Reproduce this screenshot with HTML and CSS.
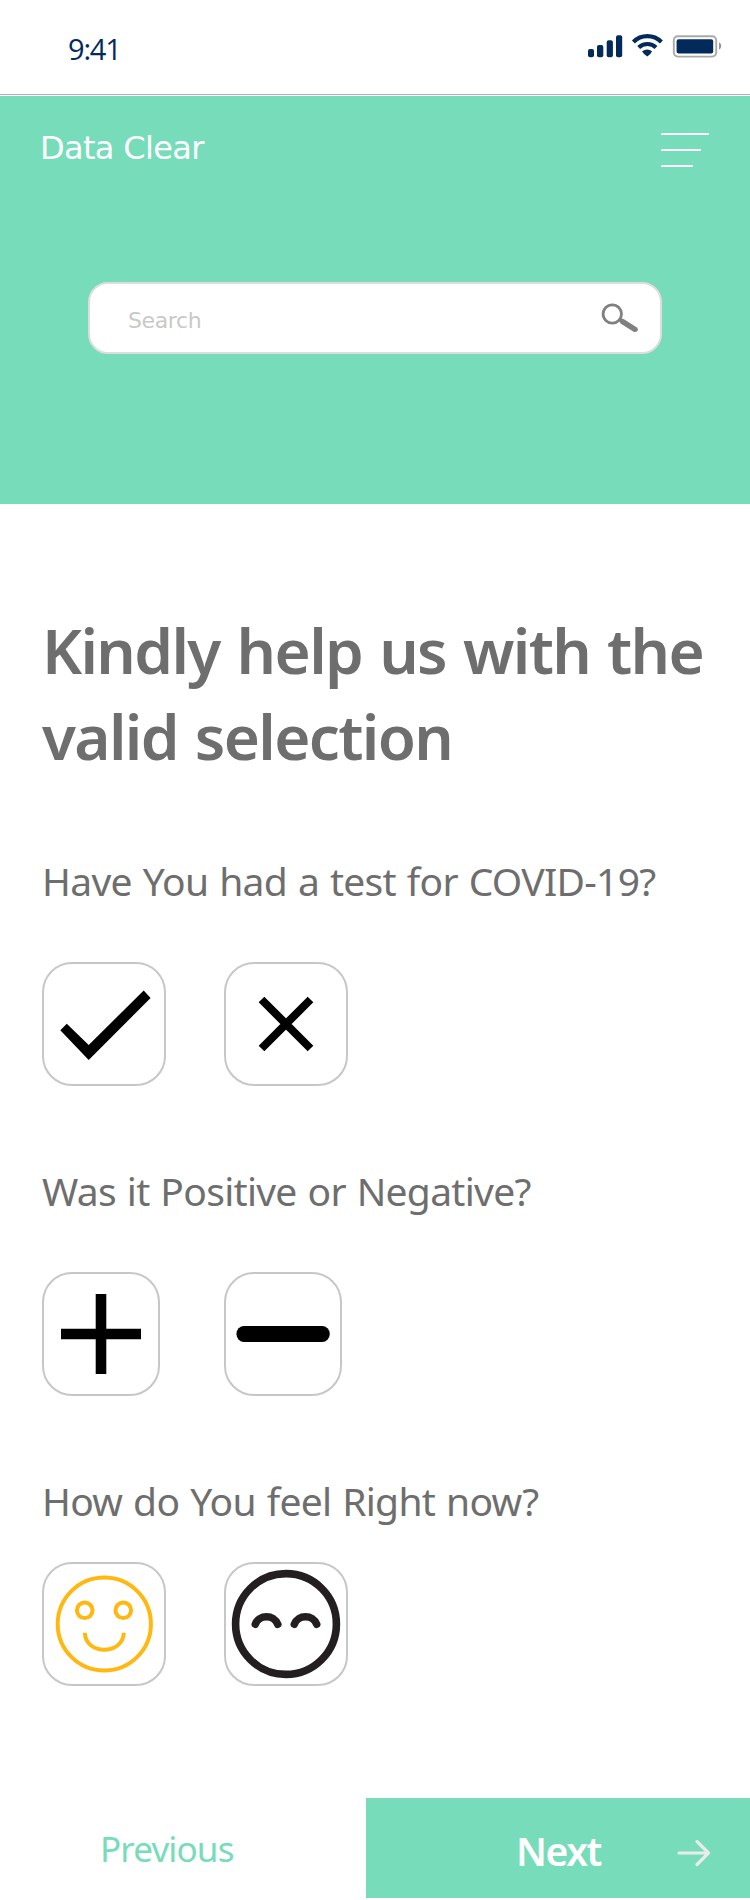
FILE: index.html
```
<!DOCTYPE html>
<html lang="en">
<head>
<meta charset="utf-8">
<title>Data Clear</title>
<link rel="stylesheet" href="styles.css">
</head>
<body>
<div class="status">
  <span class="time">9:41</span>
  <svg class="status-icons" width="136" height="26" viewBox="0 0 136 26" aria-hidden="true">
    <g fill="#022b5c">
      <rect x="0" y="16" width="6" height="8.3" rx="2"/>
      <rect x="9" y="12" width="6.3" height="12.3" rx="2"/>
      <rect x="18.7" y="7.3" width="6.2" height="17" rx="2"/>
      <rect x="28" y="2.3" width="6.2" height="22" rx="2"/>
      <path d="M54 18.200 Q59.500 14.800 64 18.200 Q63 21 59.300 23.500 Q55.500 21 54 18.200Z"/>
      <rect x="88.600" y="6.200" width="36.600" height="14.300" rx="2"/>
    </g>
    <g fill="none" stroke="#022b5c" stroke-width="4.100">
      <path d="M45.400 9 C53 1.200 65.600 1.200 73.400 9"/>
      <path d="M50.700 14.400 C55.500 9.800 63.200 9.800 68 14.400"/>
    </g>
    <rect x="85.800" y="3.200" width="42.400" height="20.400" rx="4" fill="none" stroke="#aaa" stroke-width="1.900"/>
    <path d="M131 9.300 Q133.300 10.200 133.300 13 Q133.300 15.800 131 16.700Z" fill="#999"/>
  </svg>
</div>
<header class="hero">
  <div class="topbar">
    <span class="brand">Data Clear</span>
    <div class="menu"><i class="line long"></i><i class="line mid"></i><i class="line short"></i></div>
  </div>
  <div class="search">
    <span class="placeholder">Search</span>
    <svg width="38" height="30" viewBox="0 0 38 30" aria-hidden="true">
      <circle cx="12.300" cy="12" r="9.200" fill="none" stroke="#808080" stroke-width="2.800"/>
      <path d="M18.500 17.500 L20.500 16 L24 17.300 L37 25.500 Q39 28 36.500 29.800 L34 30 L20.500 21.600Z" fill="#808080"/>
    </svg>
  </div>
</header>
<main class="content">
  <h1 class="title">Kindly help us with the<br>valid selection</h1>
  <section class="question">
    <p class="label">Have You had a test for COVID-19?</p>
    <div class="options">
      <div class="option"><svg width="120" height="120" viewBox="0 0 120 120"><path d="M16.300 66.300 22.800 59.800 44.700 81 99.700 26.500 106.600 34 44.700 96Z"/></svg></div>
      <div class="option"><svg width="120" height="120" viewBox="0 0 120 120"><path d="M35.500 35.500 84.500 84.500M84.500 35.500 35.500 84.500" stroke="#000" stroke-width="8"/></svg></div>
    </div>
  </section>
  <section class="question">
    <p class="label result">Was it Positive or Negative?</p>
    <div class="options spaced">
      <div class="option narrow"><svg width="114" height="120" viewBox="0 0 114 120"><path d="M17 60H97M57 20V100" stroke="#000" stroke-width="10.600"/></svg></div>
      <div class="option narrow"><svg width="114" height="120" viewBox="0 0 114 120"><rect x="10.500" y="52" width="93.200" height="16" rx="7.500"/></svg></div>
    </div>
  </section>
  <section class="question last">
    <p class="label">How do You feel Right now?</p>
    <div class="options">
      <div class="option"><svg width="120" height="120" viewBox="0 0 120 120"><g fill="none" stroke="#ffb812" stroke-width="4"><circle cx="60.300" cy="60" r="46.600"/><circle cx="40.700" cy="46.300" r="7.800"/><circle cx="79.300" cy="46.300" r="7.800"/><path d="M40.800 68.700C41.500 91.400 79 91.400 79.800 68.700"/></g></svg></div>
      <div class="option"><svg width="120" height="120" viewBox="0 0 120 120"><g fill="none" stroke="#231f20" stroke-width="7.600" stroke-linecap="round"><circle cx="60" cy="60" r="50.400"/><path d="M29.300 60.300C33 50.200 48 50.200 51.800 60.300M68.300 60.300C72 50.200 87 50.200 90.700 60.300"/></g></svg></div>
    </div>
  </section>
</main>
<nav class="actions">
  <div class="previous">Previous</div>
  <div class="next">
    <span>Next</span>
    <svg width="34" height="28" viewBox="0 0 34 28" fill="none" stroke="#ebebeb" stroke-width="3.200" stroke-linecap="round" stroke-linejoin="round" aria-hidden="true"><path d="M2 14H31.500M20 2.500 31.500 14 20 25.500"/></svg>
  </div>
</nav>
</body>
</html>
```
FILE: styles.css
```
* { box-sizing: border-box; }
body {
  margin: 0;
  width: 750px;
  height: 1900px;
  background: #fff;
  color: #6e6e6e;
  font-family: "Noto Sans", "Open Sans", sans-serif;
}
svg { display: block; flex: none; }

.status {
  display: flex;
  justify-content: space-between;
  align-items: flex-start;
  height: 95px;
  padding: 33px 26px 0 68px;
  border-bottom: 1px solid #b0b2c4;
}
.time {
  font-family: "Open Sans", "Noto Sans", sans-serif;
  font-size: 29px;
  line-height: 32px;
  letter-spacing: -1.2px;
  color: #022b5c;
}

.hero {
  height: 408px;
  margin-top: 1px;
  padding: 30px 41px 0 40px;
  background: #76dcb9;
}
.topbar {
  display: flex;
  justify-content: space-between;
  height: 156px;
}
.brand {
  font: 32px/45px "DejaVu Sans", sans-serif;
  letter-spacing: -0.65px;
  color: #fff;
}
.menu {
  display: flex;
  flex-direction: column;
  gap: 14px;
  width: 48px;
  padding-top: 7px;
}
.line { height: 2px; background: #fff; }
.long { width: 47.5px; }
.mid { width: 40px; }
.short { width: 32px; }

.search {
  display: flex;
  justify-content: space-between;
  width: 574px;
  height: 72px;
  margin-left: 48px;
  padding: 18px 22px 0 38px;
  border: 2px solid #ddd;
  border-radius: 20px;
  background: #fff;
}
.placeholder {
  font: 22px/37px "DejaVu Sans", sans-serif;
  letter-spacing: -0.4px;
  color: #c9c9c9;
}

.content { padding: 103px 42px 0; }
.title {
  margin: 0 -20px 77px 0;
  font-size: 62px;
  line-height: 86px;
  font-weight: 600;
  letter-spacing: -1.65px;
  word-spacing: 2.5px;
}
.question { margin-bottom: 80px; }
.label {
  margin: 0 0 56px;
  font-size: 39px;
  line-height: 50px;
  letter-spacing: -0.7px;
  word-spacing: 1.4px;
}
.result { letter-spacing: -0.7px; }
.last { margin-bottom: 0; }
.last .label { margin-bottom: 36px; }
.options { display: flex; gap: 58px; }
.spaced { gap: 64px; }
.option {
  width: 124px;
  height: 124px;
  border: 2px solid #c7c7c7;
  border-radius: 30px;
}
.narrow { width: 118px; }

.actions {
  display: flex;
  height: 100px;
  margin-top: 112px;
  line-height: 50px;
}
.previous {
  width: 366px;
  padding: 26px 0 0 100px;
  font-size: 35px;
  letter-spacing: -0.85px;
  color: #76dcb9;
}
.next {
  display: flex;
  justify-content: space-between;
  flex: 1;
  padding: 28px 39px 0 150px;
  background: #76dcb9;
  color: #fff;
  font-size: 39px;
  font-weight: 650;
  letter-spacing: -1.4px;
}
.next svg { margin-top: 13px; }
```
